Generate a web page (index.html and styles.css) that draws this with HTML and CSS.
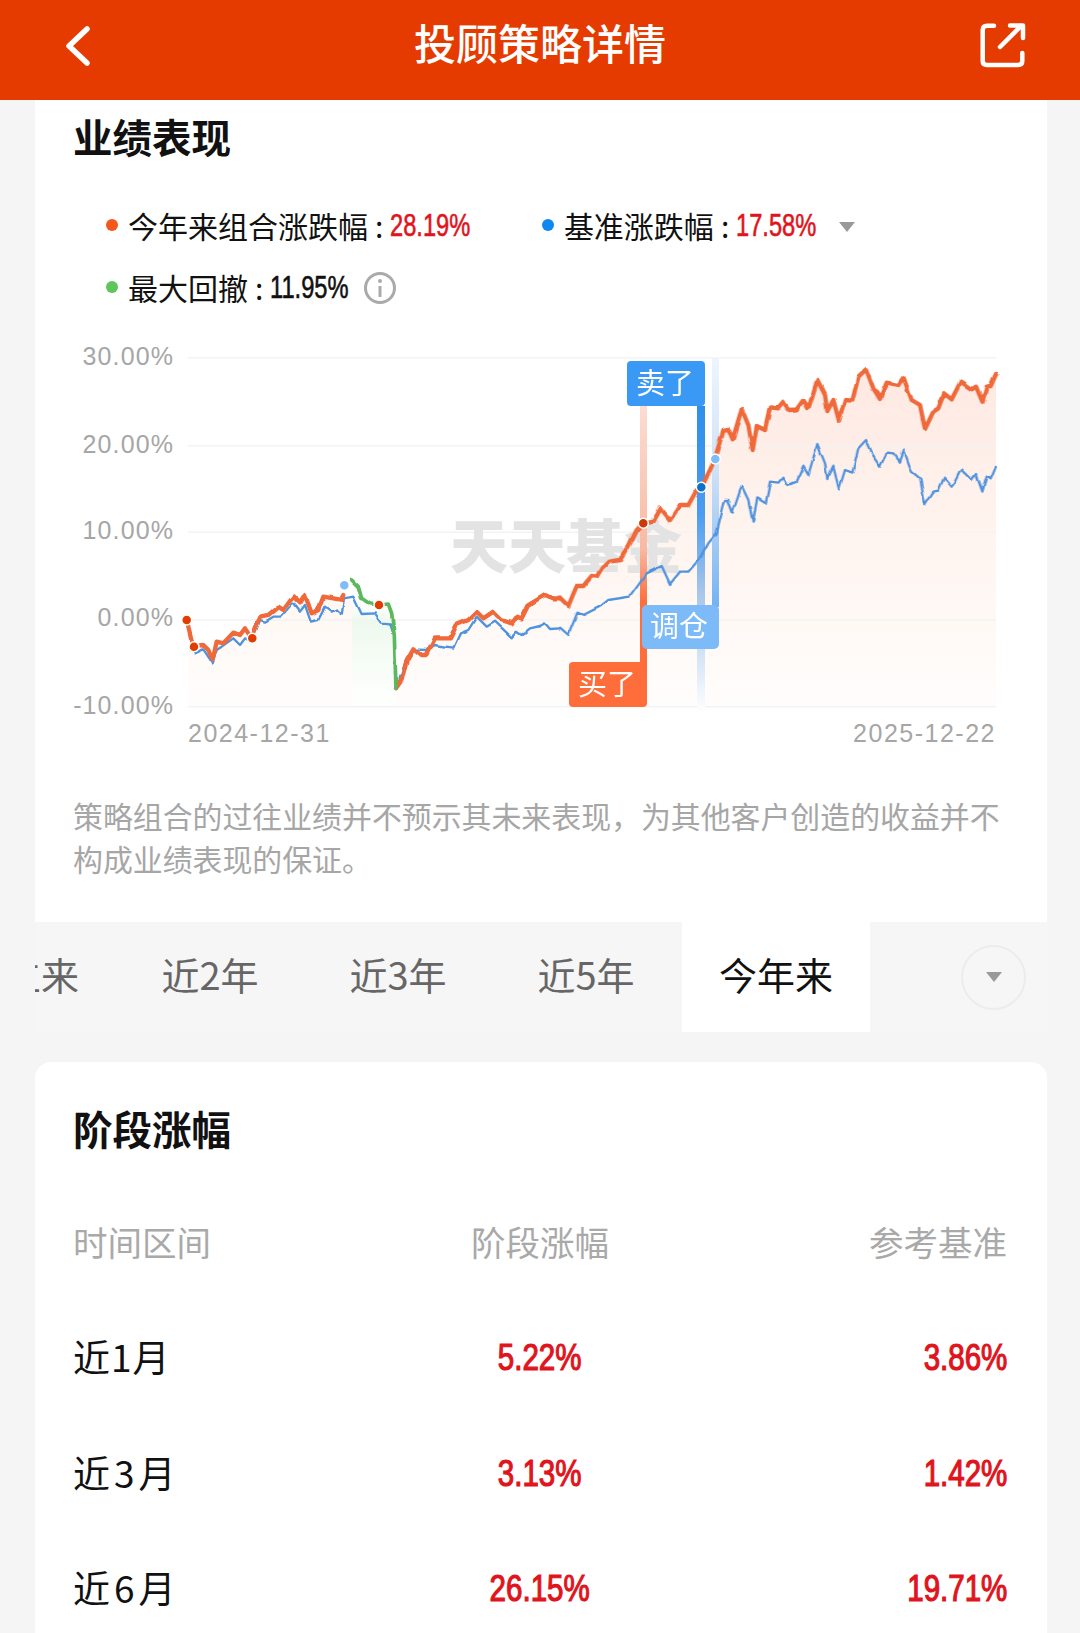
FILE: index.html
```html
<!DOCTYPE html>
<html lang="zh-CN">
<head>
    <meta charset="UTF-8">
    <meta name="viewport" content="width=device-width, initial-scale=1.0">
    <title>投顾策略详情</title>
    <link rel="stylesheet" href="styles.css">
</head>
<body>
    <header class="nav-bar">
        <svg class="nav-icon back" width="46" height="46" viewBox="0 0 46 46">
            <path d="M25 6 L7 23 L25 40" fill="none" stroke="#fff" stroke-width="5.5" stroke-linecap="round" stroke-linejoin="round"/>
        </svg>
        <h1>投顾策略详情</h1>
        <svg class="nav-icon share" width="48" height="48" viewBox="0 0 48 48">
            <path d="M15 3.7 H8 Q3.7 3.7 3.7 8 V39 Q3.7 43 8 43 H39 Q43.3 43 43.3 39 V31" fill="none" stroke="#fff" stroke-width="4.5" stroke-linecap="round"/>
            <path d="M21 25 L42 4 M31 3.5 H44 V16" fill="none" stroke="#fff" stroke-width="4.5" stroke-linecap="round" stroke-linejoin="round"/>
        </svg>
    </header>

    <main class="page">
        <section class="perf-card">
            <h2 class="card-title">业绩表现</h2>

            <div class="legend">
                <div class="legend-row">
                    <span class="legend-item">
                        <i class="dot dot-orange"></i>今年来组合涨跌幅<span class="colon">:</span><b class="num red">28.19%</b>
                    </span>
                    <span class="legend-item second">
                        <i class="dot dot-blue"></i>基准涨跌幅<span class="colon">:</span><b class="num red">17.58%</b>
                    </span>
                    <i class="caret legend-caret"></i>
                </div>
                <div class="legend-row">
                    <span class="legend-item">
                        <i class="dot dot-green"></i>最大回撤<span class="colon">:</span><b class="num">11.95%</b>
                    </span>
                    <svg class="info-icon" width="34" height="34" viewBox="0 0 34 34">
                        <circle cx="17" cy="17" r="14.5" fill="none" stroke="#aaa" stroke-width="3"/>
                        <circle cx="17" cy="10" r="2" fill="#aaa"/>
                        <path d="M17 15 V26" stroke="#aaa" stroke-width="3"/>
                    </svg>
                </div>
            </div>

            <svg class="chart" width="1012" height="450" viewBox="0 0 1012 450">
                <defs>
                    <linearGradient id="areaFill" gradientUnits="userSpaceOnUse" x1="0" y1="100" x2="0" y2="1130">
                        <stop offset="0" stop-color="#fee8e1"/>
                        <stop offset="0.5" stop-color="#fff4ef"/>
                        <stop offset="1" stop-color="#fffdfc"/>
                    </linearGradient>
                    <linearGradient id="greenFill" gradientUnits="userSpaceOnUse" x1="0" y1="820" x2="0" y2="1100">
                        <stop offset="0" stop-color="#ffffff"/>
                        <stop offset="0.2" stop-color="#eef9ee"/>
                        <stop offset="1" stop-color="#fdfffd"/>
                    </linearGradient>
                    <linearGradient id="buyBand" x1="0" y1="0" x2="0" y2="1">
                        <stop offset="0" stop-color="#fcdcd2"/>
                        <stop offset="0.55" stop-color="#f9b9a3"/>
                        <stop offset="0.75" stop-color="#fb6f3f"/>
                        <stop offset="1" stop-color="#ff6d3a"/>
                    </linearGradient>
                    <linearGradient id="sellBand" x1="0" y1="0" x2="0" y2="1">
                        <stop offset="0" stop-color="#2f8fe8"/>
                        <stop offset="0.35" stop-color="#4a9cf0"/>
                        <stop offset="0.6" stop-color="#a5c5ea"/>
                        <stop offset="0.85" stop-color="#dce9f8"/>
                        <stop offset="1" stop-color="#ffffff"/>
                    </linearGradient>
                    <linearGradient id="adjustBand" x1="0" y1="0" x2="0" y2="1">
                        <stop offset="0" stop-color="#eef5fe"/>
                        <stop offset="0.45" stop-color="#cfe2f8"/>
                        <stop offset="0.85" stop-color="#8fc0f3"/>
                        <stop offset="1" stop-color="#70b2f5"/>
                    </linearGradient>
                    <filter id="rough" x="-5%" y="-5%" width="110%" height="110%">
                        <feTurbulence type="fractalNoise" baseFrequency="0.07" numOctaves="2" seed="4"/>
                        <feDisplacementMap in="SourceGraphic" scale="3.5" xChannelSelector="R" yChannelSelector="G"/>
                    </filter>
                </defs>

                <!-- filled areas, drawn in the 3x units of the left and right halves -->
                <g transform="translate(25 0) scale(0.33333)">
                    <path fill="url(#areaFill)" d="M385 870 L400 950 L430 945 L445 960 L458 990 L470 935 L490 940 L520 908 L540 915 L555 895 L575 925 L600 860 L625 855 L655 830 L670 840 L700 800 L720 820 L735 795 L755 850 L775 840 L790 800 L820 805 L845 810 L850 795 L875 800 L875 1130 L385 1130 Z"/>
                    <path fill="url(#greenFill)" d="M875 820 H1005 V1130 H875 Z"/>
                    <path fill="url(#areaFill)" d="M1005 1075 L1025 1050 L1040 990 L1060 955 L1085 975 L1100 975 L1125 925 L1170 925 L1190 885 L1225 870 L1250 845 L1270 865 L1300 845 L1325 870 L1355 880 L1370 860 L1385 865 L1405 825 L1455 795 L1480 805 L1501 805 L1501 1130 L1005 1130 Z"/>
                </g>
                <g transform="translate(505 0) scale(0.33333)">
                    <path fill="url(#areaFill)" d="M60 803 L85 828 L110 768 L130 768 L155 738 L170 740 L185 715 L205 695 L240 690 L265 650 L290 600 L310 580 L340 575 L362 535 L390 570 L420 525 L445 525 L470 480 L485 470 L510 420 L525 385 L550 300 L565 297 L578 328 L605 237 L625 285 L638 360 L650 288 L675 300 L690 232 L715 235 L730 218 L745 240 L770 238 L790 210 L805 235 L832 150 L855 195 L862 243 L880 210 L897 272 L915 210 L937 212 L955 140 L978 118 L1000 175 L1020 207 L1040 158 L1075 165 L1090 142 L1115 210 L1140 225 L1155 297 L1180 245 L1195 235 L1212 190 L1235 208 L1262 155 L1295 178 L1308 170 L1327 215 L1340 170 L1352 168 L1368 132 L1368 1130 L60 1130 Z"/>
                </g>

                <!-- grid -->
                <g class="grid-lines">
                    <path d="M153 27.7 H961"/>
                    <path d="M153 115.7 H961"/>
                    <path d="M153 202.3 H961"/>
                    <path d="M153 290 H961"/>
                    <path d="M153 376.7 H961"/>
                </g>
                <text class="axis-label" x="139" y="35">30.00%</text>
                <text class="axis-label" x="139" y="122.7">20.00%</text>
                <text class="axis-label" x="139" y="209">10.00%</text>
                <text class="axis-label" x="139" y="296">0.00%</text>
                <text class="axis-label" x="139" y="384">-10.00%</text>
                <text class="axis-label axis-date date-start" x="153" y="411.7">2024-12-31</text>
                <text class="axis-label axis-date" x="961" y="411.7">2025-12-22</text>

                <text class="watermark" x="415" y="238">天天基金</text>

                <!-- buy / sell / adjust bands -->
                <rect x="605" y="76" width="7" height="260" fill="url(#buyBand)"/>
                <rect x="662" y="76" width="8" height="307" fill="url(#sellBand)"/>
                <rect x="677" y="27" width="7" height="250" fill="url(#adjustBand)"/>

                <g filter="url(#rough)">
                    <g transform="translate(25 0) scale(0.33333)">
                        <path class="line-blue" d="M405 970 L430 958 L458 1000 L470 960 L485 950 L520 925 L540 945 L555 925 L575 935 L600 870 L615 875 L640 860 L665 860 L700 820 L720 845 L735 825 L752 875 L775 870 L795 830 L815 845 L830 838 L845 852 L852 805 L880 800 L905 852 L945 850 L965 878 L990 880 L1003 920 L1008 1075 L1025 1030 L1040 985 L1060 958 L1100 960 L1125 945 L1180 953 L1200 910 L1225 900 L1250 860 L1280 890 L1305 875 L1355 922 L1370 905 L1385 915 L1410 895 L1440 888 L1455 880 L1470 897 L1500 895"/>
                        <path class="line-orange" d="M380 870 L400 950 L430 945 L445 960 L458 990 L470 935 L490 940 L520 908 L540 915 L555 895 L575 925 L600 860 L625 855 L655 830 L670 840 L700 800 L720 820 L735 795 L755 850 L775 840 L790 800 L820 805 L845 810 L850 795"/>
                        <path class="line-orange" d="M1008 1075 L1025 1050 L1040 990 L1060 955 L1085 975 L1100 975 L1125 925 L1170 925 L1190 885 L1225 870 L1250 845 L1270 865 L1300 845 L1325 870 L1355 880 L1370 860 L1385 865 L1405 825 L1455 795 L1480 805 L1500 805"/>
                        <path class="line-green" d="M875 750 L895 770 L905 805 L930 822 L957 825 L985 822 L995 850 L1003 920 L1008 1075"/>
                    </g>
                    <g transform="translate(505 0) scale(0.33333)">
                        <path class="line-blue" d="M60 893 L85 915 L112 848 L130 855 L180 830 L205 810 L270 800 L320 730 L365 708 L390 762 L420 725 L445 725 L480 685 L505 640 L530 610 L555 510 L565 510 L578 548 L605 468 L625 510 L638 575 L652 505 L677 520 L690 455 L715 458 L730 440 L745 465 L770 455 L790 410 L805 435 L832 342 L855 400 L862 447 L880 410 L897 478 L915 420 L937 428 L955 355 L978 330 L1000 380 L1020 410 L1040 368 L1060 370 L1080 395 L1092 362 L1115 425 L1140 445 L1155 523 L1180 485 L1195 482 L1212 443 L1235 470 L1262 418 L1295 450 L1308 432 L1327 485 L1340 440 L1352 448 L1368 410"/>
                        <path class="line-orange" d="M60 803 L85 828 L110 768 L130 768 L155 738 L170 740 L185 715 L205 695 L240 690 L265 650 L290 600 L310 580 L340 575 L362 535 L390 570 L420 525 L445 525 L470 480 L485 470 L510 420 L525 385 L550 300 L565 297 L578 328 L605 237 L625 285 L638 360 L650 288 L675 300 L690 232 L715 235 L730 218 L745 240 L770 238 L790 210 L805 235 L832 150 L855 195 L862 243 L880 210 L897 272 L915 210 L937 212 L955 140 L978 118 L1000 175 L1020 207 L1040 158 L1075 165 L1090 142 L1115 210 L1140 225 L1155 297 L1180 245 L1195 235 L1212 190 L1235 208 L1262 155 L1295 178 L1308 170 L1327 215 L1340 170 L1352 168 L1368 132"/>
                    </g>
                </g>

                <!-- trade labels -->
                <rect class="tag-sell" x="592" y="31" width="78" height="45" rx="4"/>
                <rect class="tag-buy" x="534" y="332" width="78" height="45" rx="4"/>
                <rect class="tag-adjust" x="607" y="275" width="77" height="44" rx="5"/>
                <text class="tag-text" x="630" y="64">卖了</text>
                <text class="tag-text" x="572" y="365">买了</text>
                <text class="tag-text" x="644" y="307">调仓</text>

                <!-- markers -->
                <g class="marker">
                    <circle cx="151.7" cy="290" r="5" fill="#e23d00"/>
                    <circle cx="159" cy="316.7" r="5" fill="#e23d00"/>
                    <circle cx="217.3" cy="308.3" r="5" fill="#e23d00"/>
                    <circle cx="344" cy="275" r="5" fill="#e23d00"/>
                    <circle cx="309.3" cy="255.3" r="5" fill="#80bdf8"/>
                    <circle cx="608.3" cy="193.3" r="5" fill="#c93a08"/>
                    <circle cx="666.3" cy="157.3" r="5" fill="#0b72c9"/>
                    <circle cx="680.3" cy="129" r="5" fill="#80bdf8"/>
                </g>
            </svg>

            <p class="disclaimer">策略组合的过往业绩并不预示其未来表现，为其他客户创造的收益并不构成业绩表现的保证。</p>
        </section>

        <nav class="tabs">
            <div class="tab-track">
                <span class="tab">成立来</span>
                <span class="tab">近2年</span>
                <span class="tab">近3年</span>
                <span class="tab">近5年</span>
                <span class="tab active">今年来</span>
            </div>
            <span class="more-btn"><i class="caret"></i></span>
        </nav>

        <section class="stage-card">
            <h2 class="card-title">阶段涨幅</h2>
            <div class="stage-row stage-head">
                <span>时间区间</span>
                <span>阶段涨幅</span>
                <span>参考基准</span>
            </div>
            <div class="stage-row">
                <span class="period">近1月</span>
                <span class="num-lg red">5.22%</span>
                <span class="num-lg red">3.86%</span>
            </div>
            <div class="stage-row">
                <span class="period">近<span class="digit">3</span>月</span>
                <span class="num-lg red">3.13%</span>
                <span class="num-lg red">1.42%</span>
            </div>
            <div class="stage-row">
                <span class="period">近<span class="digit">6</span>月</span>
                <span class="num-lg red">26.15%</span>
                <span class="num-lg red">19.71%</span>
            </div>
        </section>
    </main>
</body>
</html>
```

FILE: styles.css
```css
html, body {
    height: 100%;
}

body {
    margin: 0;
    overflow: hidden;
    background: #f5f5f5;
    color: #111;
    font-family: 'Noto Sans CJK SC', 'Liberation Sans', sans-serif;
}

.nav-bar {
    display: grid;
    grid-template-columns: 1fr auto 1fr;
    align-items: center;
    height: 100px;
    padding: 0 53px 8px;
    box-sizing: border-box;
    background: #e63b00;
}

.nav-bar h1 {
    margin: 0 0 8px;
    color: #fff;
    font-size: 42px;
    font-weight: 500;
    line-height: 60px;
}

.nav-icon.back {
    margin-left: 9px;
}

.nav-icon.share {
    justify-self: end;
}

.page {
    padding: 0 33px 0 35px;
}

.perf-card {
    background: #fff;
    padding-top: 14px;
    padding-bottom: 42px;
}

.card-title {
    margin: 0;
    padding-left: 38px;
    font-size: 39.5px;
    font-weight: 700;
    line-height: 44px;
}

/* legend */
.legend {
    margin-top: 36px;
    padding-left: 71px;
    margin-bottom: 12px;
}

.legend-row {
    display: flex;
    align-items: center;
    height: 62px;
    font-size: 30px;
}

.legend-item {
    display: flex;
    align-items: center;
}

.legend-item.second {
    margin-left: 71px;
}

.dot {
    width: 12px;
    height: 12px;
    margin-right: 10px;
    border-radius: 50%;
}

.dot-orange { background: #f2581c; }
.dot-blue { background: #0f87f0; }
.dot-green { background: #5cc65c; }

.colon {
    margin: 0 7px;
}

/* Arial widths are too wide for the condensed figures in the app */
.num {
    display: inline-block;
    margin-right: -28px;
    font-family: 'Liberation Sans', sans-serif;
    font-size: 32px;
    font-weight: 400;
    -webkit-text-stroke: 0.6px currentColor;
    transform: scaleX(0.74);
    transform-origin: left center;
}

.red {
    color: #e0141c;
}

.caret {
    display: block;
    width: 0;
    height: 0;
    border-left: 8px solid transparent;
    border-right: 8px solid transparent;
    border-top: 10px solid #999;
}

.legend-caret {
    margin-left: 22px;
    margin-top: 4px;
}

.info-icon {
    margin-left: 14px;
    margin-top: 2px;
}

/* chart */
.chart {
    display: block;
}

.grid-lines path {
    fill: none;
    stroke: #f3f3f3;
    stroke-width: 1.5;
}

.axis-label {
    fill: #a6a6a6;
    font-family: 'Liberation Sans', sans-serif;
    font-size: 25px;
    letter-spacing: 1.1px;
    text-anchor: end;
}

.axis-date {
    letter-spacing: 1.5px;
}

.axis-label.date-start {
    text-anchor: start;
}

.watermark {
    fill: #e3e3e3;
    font-size: 58px;
    font-weight: 900;
}

.line-orange,
.line-blue,
.line-green {
    fill: none;
    stroke-linejoin: round;
    stroke-linecap: round;
}

.line-orange {
    stroke: #f0693a;
    stroke-width: 13;
}

.line-blue {
    stroke: #4f92de;
    stroke-width: 7;
}

.line-green {
    stroke: #5cb85c;
    stroke-width: 11;
}

.tag-sell { fill: #3a99f5; }
.tag-buy { fill: #ff6d3a; }
.tag-adjust { fill: #7dbbf8; }

.tag-text {
    fill: #fff;
    font-size: 29px;
    text-anchor: middle;
}

.marker circle {
    stroke: #fff;
    stroke-width: 1.5;
}

.disclaimer {
    margin: 14px 0 0;
    padding: 0 38px;
    color: #a6a6a6;
    font-size: 29.9px;
    line-height: 43px;
}

/* period tabs */
.tabs {
    display: flex;
    align-items: center;
    justify-content: space-between;
    height: 110px;
    overflow: hidden;
    padding-right: 21px;
    background: #f6f6f6;
}

.tab-track {
    display: flex;
    margin-left: -105px;
    height: 100%;
}

.tab {
    display: flex;
    align-items: center;
    justify-content: center;
    flex: none;
    width: 188px;
    padding: 0 4px 8px 0;
    box-sizing: border-box;
    color: #666;
    font-size: 38px;
}

.tab.active {
    padding-right: 0;
    background: #fff;
    color: #111;
}

.more-btn {
    display: flex;
    align-items: center;
    justify-content: center;
    width: 65px;
    height: 65px;
    box-sizing: border-box;
    border: 2px solid #ececec;
    border-radius: 50%;
}

/* stage returns */
.stage-card {
    margin-top: 30px;
    padding: 44px 40px 0 0;
    border-radius: 16px 16px 0 0;
    background: #fff;
}

.stage-card .card-title {
    margin-bottom: 33px;
}

.stage-row {
    display: grid;
    grid-template-columns: 1fr 1fr 1fr;
    align-items: center;
    height: 115.5px;
    margin-left: 38px;
}

.stage-row > :nth-child(2) {
    text-align: center;
}

.stage-row > :nth-child(3) {
    text-align: right;
    transform-origin: right center;
}

.stage-head {
    color: #a9a9a9;
    font-size: 34.5px;
}

.period {
    font-size: 37px;
    letter-spacing: 1px;
}

.digit {
    margin: 0 3px;
}

.num-lg {
    font-family: 'Liberation Sans', sans-serif;
    font-size: 36px;
    font-weight: 400;
    -webkit-text-stroke: 1.2px currentColor;
    transform: translateY(2px) scaleX(0.82);
}
```
